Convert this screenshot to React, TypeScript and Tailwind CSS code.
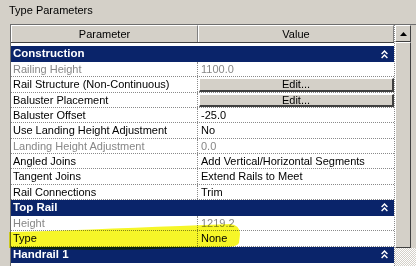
import React from 'react'

type Row = {
  name: string
  value?: string
  disabled?: boolean
  button?: boolean
}

type Group = {
  title: string
  rows: Row[]
}

const groups: Group[] = [
  {
    title: 'Construction',
    rows: [
      { name: 'Railing Height', value: '1100.0', disabled: true },
      { name: 'Rail Structure (Non-Continuous)', value: 'Edit...', button: true },
      { name: 'Baluster Placement', value: 'Edit...', button: true },
      { name: 'Baluster Offset', value: '-25.0' },
      { name: 'Use Landing Height Adjustment', value: 'No' },
      { name: 'Landing Height Adjustment', value: '0.0', disabled: true },
      { name: 'Angled Joins', value: 'Add Vertical/Horizontal Segments' },
      { name: 'Tangent Joins', value: 'Extend Rails to Meet' },
      { name: 'Rail Connections', value: 'Trim' },
    ],
  },
  {
    title: 'Top Rail',
    rows: [
      { name: 'Height', value: '1219.2', disabled: true },
      { name: 'Type', value: 'None' },
    ],
  },
  { title: 'Handrail 1', rows: [] },
]

const Collapse = () => (
  <svg width="7" height="9" viewBox="0 0 7 9" fill="none" stroke="white" strokeWidth="1.4">
    <path d="M0.6 4 L3.5 1 L6.4 4" />
    <path d="M0.6 8 L3.5 5 L6.4 8" />
  </svg>
)

const GroupBand = ({ title, first }: { title: string; first?: boolean }) => (
  <div
    className={`h-[16px] shrink-0 bg-[#0a246a] text-white font-bold text-[11.5px] leading-none pl-[2px] pr-[6px] flex items-center justify-between ${first ? 'mt-[3px]' : ''}`}
  >
    <span>{title}</span>
    <Collapse />
  </div>
)

const PropRow = ({ row }: { row: Row }) => {
  const tone = row.disabled ? 'text-[#878787]' : 'text-black'
  return (
    <div className="h-[15.33px] shrink-0 flex border-b border-dotted border-[#8a8a8a]">
      <div className={`w-[187px] shrink-0 pl-[2px] flex items-center border-r border-dotted border-[#8a8a8a] whitespace-nowrap ${tone}`}>
        {row.name}
      </div>
      {row.button ? (
        <div className="flex-1 pl-[1px] pt-[1px] flex">
          <div className="flex-1 flex items-center justify-center bg-[#d4d0c8] border-t border-l border-white border-r-2 border-b-2 border-r-[#404040] border-b-[#404040] text-black">
            {row.value}
          </div>
        </div>
      ) : (
        <div className={`flex-1 pl-[3px] flex items-center whitespace-nowrap ${tone}`}>{row.value}</div>
      )}
    </div>
  )
}

export default function App() {
  return (
    <div className="w-[416px] h-[266px] bg-[#d4d0c8] overflow-hidden relative font-['Liberation_Sans',Arial,sans-serif] text-[11px] text-black">
      <div className="h-[24px] pl-[9px] pt-[4px] leading-[13px]">Type Parameters</div>

      <div className="ml-[10px] h-[242px] flex border-t border-l border-[#6e6e6e]">
        {/* grid */}
        <div className="w-[384px] shrink-0 bg-white flex flex-col border-r border-dotted border-[#8a8a8a]">
          <div className="h-[18px] shrink-0 flex bg-[#d4d0c8] border-b border-[#404040]">
            <div className="w-[187px] shrink-0 flex items-center justify-center border-t border-l border-white border-r border-r-[#808080]">
              Parameter
            </div>
            <div className="flex-1 flex items-center justify-center border-t border-l border-white border-r border-r-[#808080]">
              Value
            </div>
          </div>
          {groups.map((g, i) => (
            <React.Fragment key={g.title}>
              <GroupBand title={g.title} first={i === 0} />
              {g.rows.map((r) => (
                <PropRow key={r.name} row={r} />
              ))}
            </React.Fragment>
          ))}
        </div>

        {/* scrollbar */}
        <div className="w-[21px] shrink-0 flex flex-col">
          <div className="flex-1 flex">
            <div className="w-[16px] shrink-0 flex flex-col">
              <div className="h-[17px] shrink-0 flex items-center justify-center bg-[#d4d0c8] border-t border-l border-white border-r border-b border-r-[#404040] border-b-[#404040]">
                <svg width="7" height="4" viewBox="0 0 7 4">
                  <path d="M3.5 0 L7 4 L0 4 Z" fill="black" />
                </svg>
              </div>
              <div className="flex-1 bg-[#d4d0c8] border-t border-l border-white border-r border-b border-r-[#404040] border-b-[#404040]" />
            </div>
            <div className="flex-1 bg-[#d4d0c8]" />
          </div>
          <div className="h-[18px] shrink-0 bg-[repeating-conic-gradient(#ffffff_0_25%,#d4d0c8_0_50%)] bg-[length:2px_2px]" />
        </div>
      </div>

      {/* highlighter stroke over the Type row */}
      <svg className="absolute left-0 top-0 pointer-events-none mix-blend-multiply" width="416" height="266" viewBox="0 0 416 266">
        <path
          d="M9 232 C60 231 120 228 180 226 L230 224 Q240 225 240 234 L239 243 Q237 247 226 247 L180 248 C120 251 50 250 9 248 Z"
          fill="#f6f628"
        />
      </svg>
    </div>
  )
}
